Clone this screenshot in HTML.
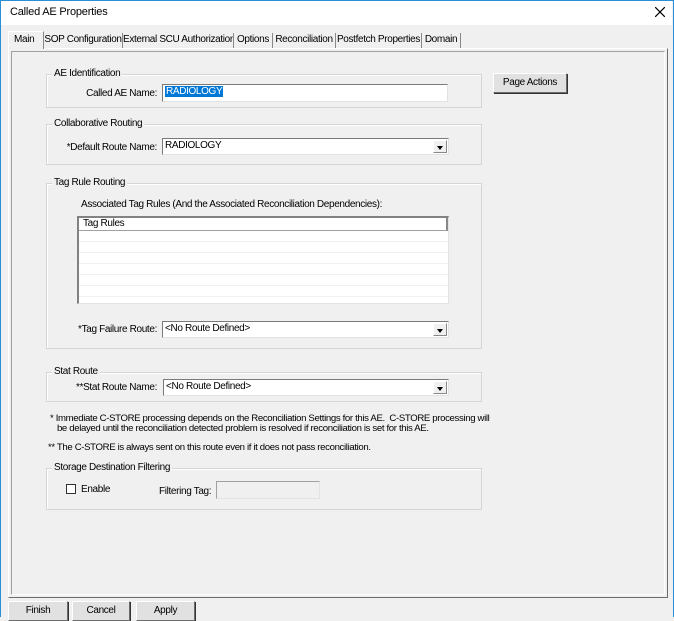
<!DOCTYPE html>
<html><head><style>
*{box-sizing:border-box;margin:0;padding:0}
body{width:674px;height:617px;background:#f0f0f0;font-family:"Liberation Sans",sans-serif;font-size:10px;color:#000;position:relative;overflow:hidden;letter-spacing:-0.35px}
.a{position:absolute;white-space:nowrap}
.r{position:absolute;white-space:nowrap;right:517px;text-align:right}
.win{position:absolute;left:0;top:0;width:674px;height:617px;border:1px solid #2b8fd8;border-bottom:none}
.title{position:absolute;left:1px;top:1px;width:671px;height:24px;background:#fff}
.grp{position:absolute;border:1px solid #d5d5d5;box-shadow:inset 1px 1px 0 #fff}
.gl{position:absolute;top:-7px;left:5px;background:#f0f0f0;padding:0 2px;line-height:12px;white-space:nowrap}
.inp{position:absolute;background:#fff;border:1px solid #7a7a7a;border-right-color:#e3e3e3;border-bottom-color:#e3e3e3;line-height:14px;padding-left:2px;white-space:nowrap}
.dd{position:absolute;right:1px;top:1px;width:14px;bottom:1px;background:#f0f0f0;border:1px solid #fff;border-right-color:#888;border-bottom-color:#888}
.dd:after{content:"";position:absolute;left:3px;top:5px;border-left:3.5px solid transparent;border-right:3.5px solid transparent;border-top:4px solid #000}
.btn{position:absolute;background:#e1e1e1;border:1px solid #fff;border-right-color:#6d6d6d;border-bottom-color:#6d6d6d;box-shadow:1px 1px 0 #333;text-align:center;white-space:nowrap}
.tab{position:absolute;top:33px;height:15px;line-height:14px;border-right:1px solid #888;text-align:center;white-space:nowrap;overflow:hidden}
</style></head><body>
<div class="win"></div>
<div class="title"></div>
<div class="a" style="left:10px;top:6px;font-size:11px;letter-spacing:-0.2px">Called AE Properties</div>
<svg class="a" style="left:655px;top:7px" width="10" height="10"><path d="M0 0L10 10M10 0L0 10" stroke="#000" stroke-width="1.2"/></svg>

<div class="a" style="left:8px;top:31px;width:36px;height:18px;background:#f0f0f0;border:1px solid #fff;border-right-color:#888;border-bottom:none;z-index:2"></div>
<div class="a" style="left:14px;top:34px;z-index:3">Main</div>
<div class="tab" style="left:44px;width:79px">SOP Configuration</div>
<div class="tab" style="left:123px;width:111px">External SCU Authorization</div>
<div class="tab" style="left:234px;width:39px">Options</div>
<div class="tab" style="left:273px;width:63px">Reconciliation</div>
<div class="tab" style="left:336px;width:86px">Postfetch Properties</div>
<div class="tab" style="left:422px;width:39px">Domain</div>

<div class="a" style="left:8px;top:48px;width:660px;height:550px;border:1px solid #fff;border-right-color:#6d6d6d;border-bottom-color:#6d6d6d"></div>
<div class="a" style="left:11px;top:51px;width:654px;height:544px;border:1px solid #a0a0a0;border-right-color:#fff;border-bottom-color:#fff"></div>

<div class="grp" style="left:46px;top:74px;width:436px;height:34px"><span class="gl">AE Identification</span></div>
<div class="r" style="top:88px">Called AE Name:</div>
<div class="inp" style="left:162px;top:84px;width:286px;height:18px"><span style="background:#0078d7;color:#fff;padding:0 1px">RADIOLOGY</span></div>

<div class="btn" style="left:493px;top:73px;width:74px;height:20px;line-height:18px">Page Actions</div>

<div class="grp" style="left:46px;top:124px;width:436px;height:41px"><span class="gl">Collaborative Routing</span></div>
<div class="r" style="top:142px">*Default Route Name:</div>
<div class="inp" style="left:162px;top:138px;width:287px;height:17px">RADIOLOGY<div class="dd"></div></div>

<div class="grp" style="left:46px;top:183px;width:436px;height:166px"><span class="gl">Tag Rule Routing</span></div>
<div class="a" style="left:81px;top:199px">Associated Tag Rules (And the Associated Reconciliation Dependencies):</div>
<div class="a" style="left:77px;top:216px;width:372px;height:88px;background:#fff;border:1px solid #828282;border-right-color:#e3e3e3;border-bottom-color:#e3e3e3;border-left:2px solid #828282;border-top:2px solid #828282">
<div style="height:13px;border-bottom:1px solid #a0a0a0;border-right:2px solid #888;padding-left:4px;line-height:12px">Tag Rules</div>
<div style="height:11px;border-bottom:1px solid #f0f0f0"></div><div style="height:11px;border-bottom:1px solid #f0f0f0"></div><div style="height:11px;border-bottom:1px solid #f0f0f0"></div><div style="height:11px;border-bottom:1px solid #f0f0f0"></div><div style="height:11px;border-bottom:1px solid #f0f0f0"></div><div style="height:11px;border-bottom:1px solid #f0f0f0"></div>
</div>
<div class="r" style="top:324px">*Tag Failure Route:</div>
<div class="inp" style="left:162px;top:321px;width:287px;height:17px">&lt;No Route Defined&gt;<div class="dd"></div></div>

<div class="grp" style="left:46px;top:372px;width:436px;height:30px"><span class="gl">Stat Route</span></div>
<div class="r" style="top:382px">**Stat Route Name:</div>
<div class="inp" style="left:163px;top:379px;width:286px;height:17px">&lt;No Route Defined&gt;<div class="dd"></div></div>

<div class="a" style="left:50px;top:414px;line-height:10px;font-size:9.6px">* Immediate C-STORE processing depends on the Reconciliation Settings for this AE.&nbsp; C-STORE processing will<br>&nbsp;&nbsp; be delayed until the reconciliation detected problem is resolved if reconciliation is set for this AE.</div>
<div class="a" style="left:48px;top:442px;font-size:9.6px">** The C-STORE is always sent on this route even if it does not pass reconciliation.</div>

<div class="grp" style="left:46px;top:468px;width:436px;height:42px"><span class="gl">Storage Destination Filtering</span></div>
<div class="a" style="left:66px;top:484px;width:10px;height:10px;background:#fff;border:1px solid #333"></div>
<div class="a" style="left:81px;top:484px">Enable</div>
<div class="a" style="left:159px;top:486px">Filtering Tag:</div>
<div class="a" style="left:216px;top:481px;width:104px;height:18px;background:#f0f0f0;border:1px solid #a0a0a0;border-right-color:#e3e3e3;border-bottom-color:#e3e3e3"></div>

<div class="btn" style="left:8px;top:601px;width:60px;height:20px;line-height:18px">Finish</div>
<div class="btn" style="left:72px;top:601px;width:58px;height:20px;line-height:18px">Cancel</div>
<div class="btn" style="left:136px;top:601px;width:59px;height:20px;line-height:18px">Apply</div>
</body></html>
